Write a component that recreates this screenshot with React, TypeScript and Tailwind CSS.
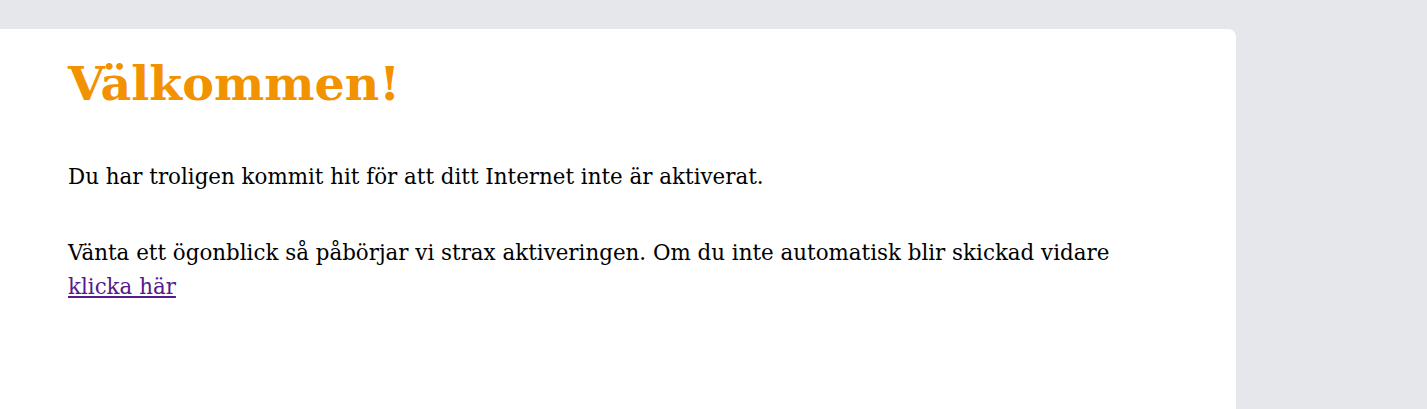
import React from 'react';

const App: React.FC = () => {
  return (
    <div className="min-h-screen bg-[#e5e7eb] pt-[29px]">
      <div className="w-[1236px] min-h-[380px] bg-white rounded-tr-lg pl-[68px] pr-8 pt-[26px] pb-8 font-['DejaVu_Serif',serif] text-black">
        <h1 className="text-[47.5px] leading-[1.2] font-bold text-[#f39200]">Välkommen!</h1>
        <p className="mt-12 text-[21.4px] leading-[34px]">
          Du har troligen kommit hit för att ditt Internet inte är aktiverat.
        </p>
        <p className="mt-[42px] text-[21.4px] leading-[34px] max-w-[1100px]">
          Vänta ett ögonblick så påbörjar vi strax aktiveringen. Om du inte automatisk blir skickad vidare{' '}
          <a href="#" className="underline text-[#551a8b]">klicka här</a>
        </p>
      </div>
    </div>
  );
};

export default App;
